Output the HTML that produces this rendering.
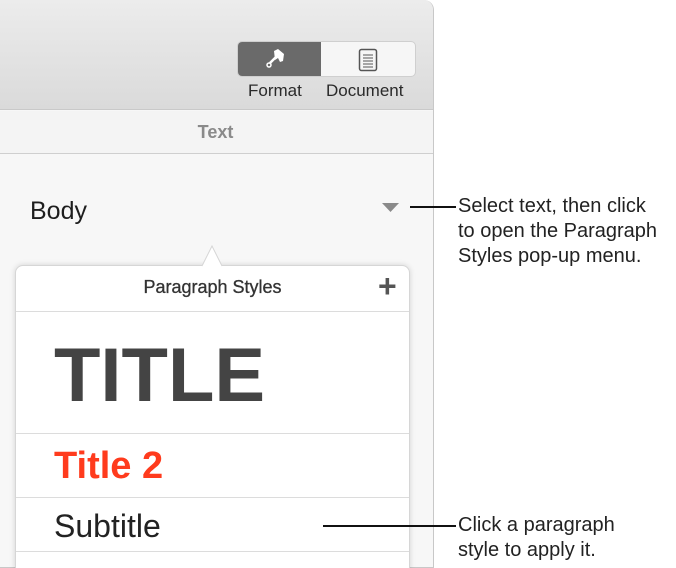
<!DOCTYPE html>
<html><head><style>
*{margin:0;padding:0;box-sizing:border-box}
html,body{width:676px;height:568px;overflow:hidden}
body{background:#fff;position:relative;font-family:"Liberation Sans",sans-serif}
.abs{position:absolute}
.panel{left:-2px;top:0;width:436px;height:568px;border:1px solid #c8c8c8;border-top:0;border-left:0;border-radius:0 10px 0 0;background:#f7f7f7;overflow:hidden}
.hdr{left:0;top:0;width:435px;height:110px;background:linear-gradient(#ececec,#dadada);border-bottom:1px solid #c9c9c9}
.seg{left:237px;top:41px;width:179px;height:36px;border-radius:5px;background:#f6f6f6;border:1px solid #cfcfcf;overflow:hidden}
.seg .a{position:absolute;left:0;top:0;width:83px;height:36px;background:#6a6a6a}
.lbl{font-size:17px;color:#2a2a2a}
.txt{left:0;top:111px;width:435px;height:43px;background:#f4f4f4;border-bottom:1px solid #cfcfcf;text-align:center;font-size:18px;color:#8a8a8a;line-height:43px;font-weight:bold}
.pop{left:15px;top:265px;width:395px;height:310px;background:#fff;border:1px solid #d6d6d6;border-radius:8px;box-shadow:0 0 6px rgba(0,0,0,.15)}
.hl{position:absolute;left:0;width:393px;height:1px;background:#dcdcdc}
.call{font-size:20px;color:#222;line-height:25px}
</style></head><body>
<div class="abs panel">
 <div class="abs hdr"></div>
 <div class="abs txt">Text</div>
</div>
<div class="abs seg"><div class="a"></div>
 <svg class="abs" style="left:27px;top:6px" width="24" height="22" viewBox="0 0 24 22"><path d="M9 3l4-2 6 5-1 7-3 1-2-4-3 2z" fill="#fff"/><path d="M11 9l-6 6" stroke="#fff" stroke-width="2.5"/><circle cx="4" cy="17" r="2" fill="none" stroke="#fff" stroke-width="1.5"/></svg>
 <svg class="abs" style="left:120px;top:6px" width="20" height="24" viewBox="0 0 20 24"><rect x="1.5" y="1.5" width="17" height="21" rx="2" fill="none" stroke="#555" stroke-width="1.5"/><path d="M5 7h10M5 10h10M5 13h10M5 16h10M5 19h10" stroke="#555" stroke-width="1"/></svg>
</div>
<div class="abs lbl" style="left:248px;top:81px">Format</div>
<div class="abs lbl" style="left:326px;top:81px">Document</div>
<div class="abs" style="left:30px;top:197px;font-size:25px;color:#1e1e1e">Body</div>
<svg class="abs" style="left:382px;top:203px" width="18" height="12"><path d="M0 0h17l-8.5 9z" fill="#8a8a8a"/></svg>
<div class="abs pop">
 <div class="abs" style="left:0;top:11px;width:393px;text-align:center;font-size:18px;color:#333;-webkit-text-stroke:0.3px #333">Paragraph Styles</div>
 <div class="abs" style="left:362px;top:2px;font-size:32px;color:#555;line-height:36px;font-weight:bold">+</div>
 <div class="hl" style="top:45px"></div>
 <div class="abs" style="left:38px;top:68px;font-size:76px;font-weight:bold;color:#444;line-height:84px">TITLE</div>
 <div class="hl" style="top:167px"></div>
 <div class="abs" style="left:38px;top:179px;font-size:38px;font-weight:bold;color:#ff3b1d;line-height:42px">Title 2</div>
 <div class="hl" style="top:231px"></div>
 <div class="abs" style="left:38px;top:240px;font-size:32px;color:#222;line-height:40px">Subtitle</div>
 <div class="hl" style="top:285px"></div>
</div>
<svg class="abs" style="left:202px;top:245px" width="20" height="22"><path d="M0 21L10 1l10 20" fill="#fff" stroke="#d6d6d6"/><rect x="1" y="20" width="18" height="3" fill="#fff"/></svg>
<div class="abs" style="left:410px;top:206px;width:46px;height:2px;background:#111"></div>
<div class="abs" style="left:323px;top:525px;width:133px;height:2px;background:#111"></div>
<div class="abs call" style="left:458px;top:194px">Select text, then click<br>to open the Paragraph<br>Styles pop-up menu.</div>
<div class="abs call" style="left:458px;top:513px">Click a paragraph<br>style to apply it.</div>
</body></html>
